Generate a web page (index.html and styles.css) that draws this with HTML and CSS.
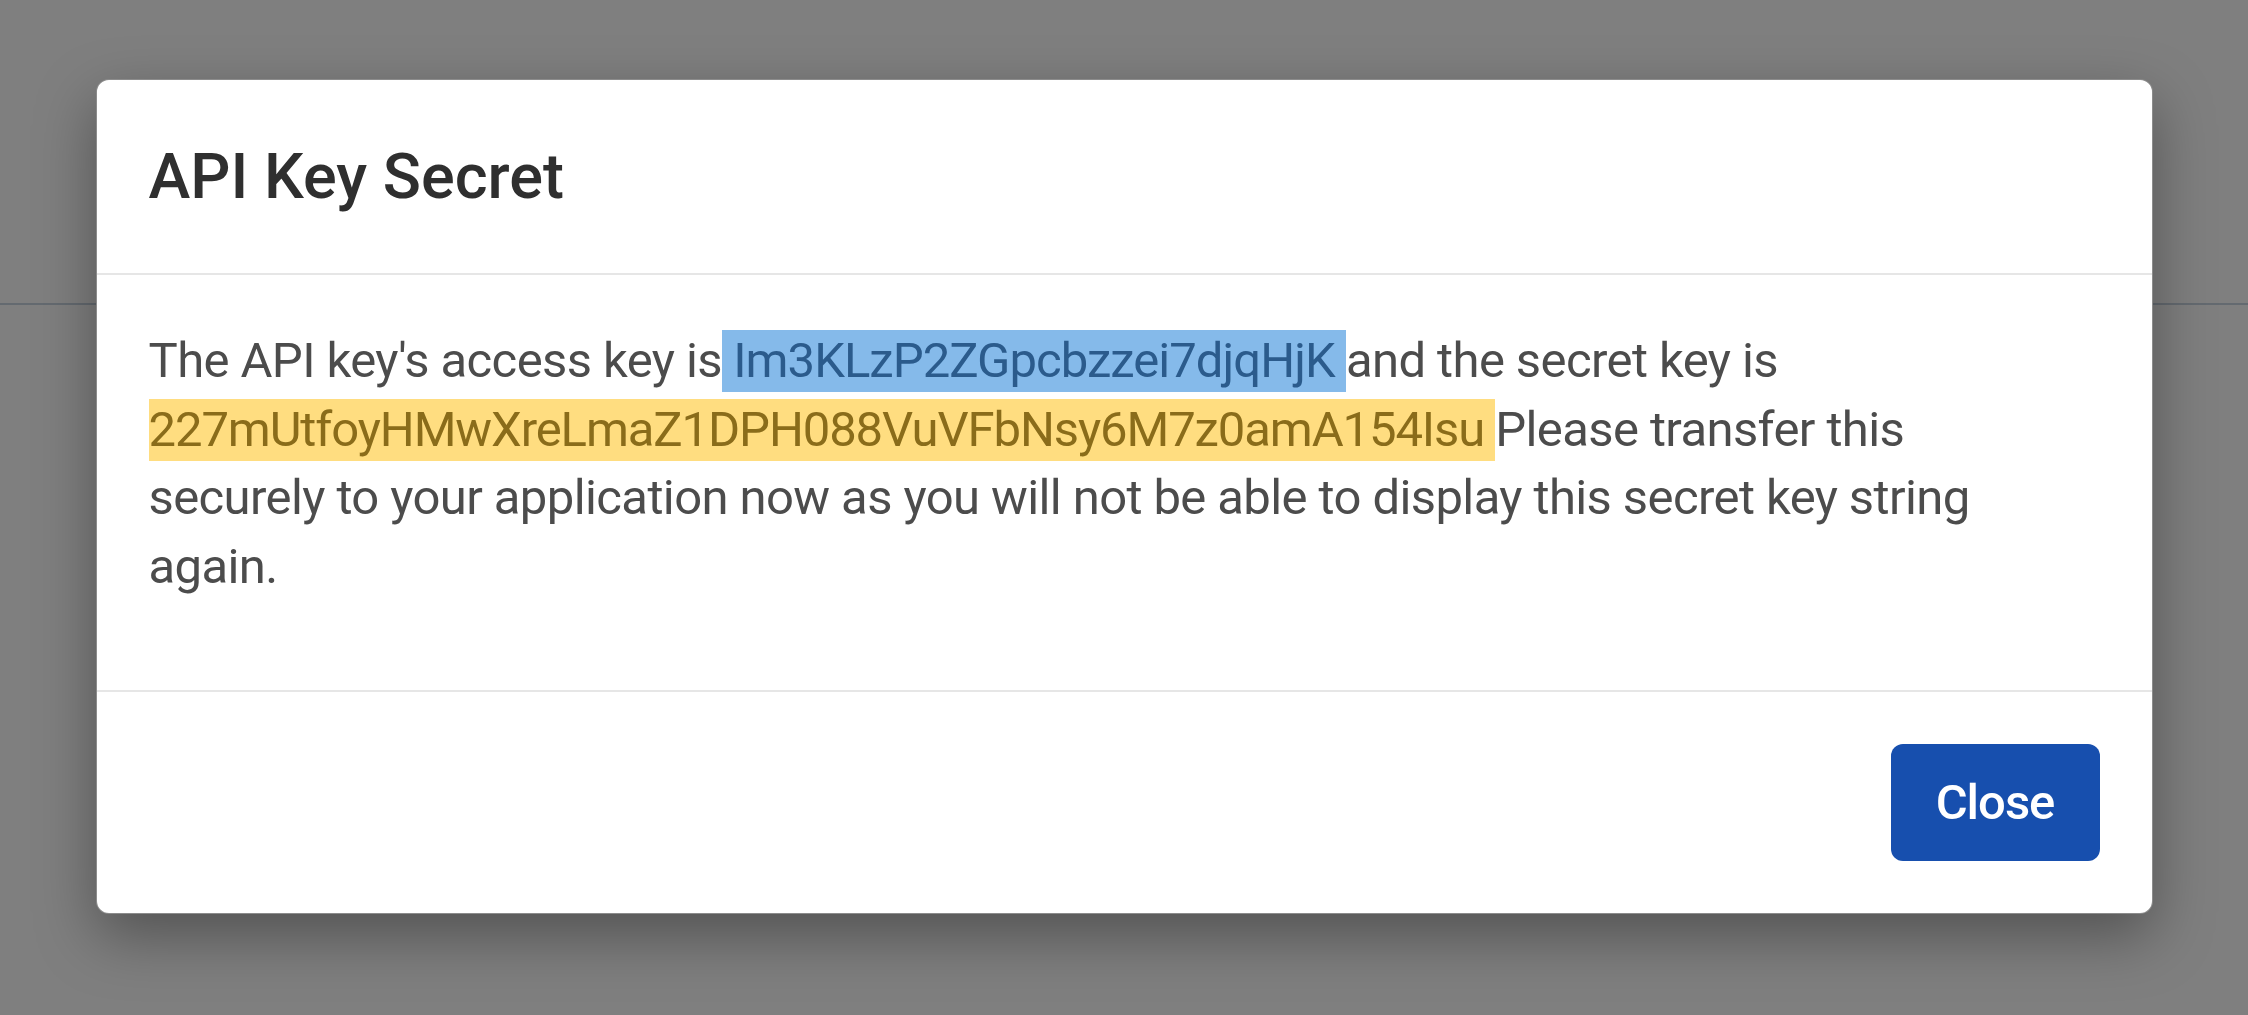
FILE: index.html
```html
<!DOCTYPE html>
<html lang="en">
<head>
<meta charset="utf-8">
<title>API Key Secret</title>
<link rel="stylesheet" href="styles.css">
</head>
<body>
<div class="page">
  <div class="page-header"></div>
</div>
<div class="overlay">
  <div class="modal" role="dialog" aria-labelledby="modal-title">
    <div class="modal-header">
      <h2 class="modal-title" id="modal-title">API Key Secret</h2>
    </div>
    <div class="modal-body">
      <p class="message">The API key's access key is<mark class="key key-access"> Im3KLzP2ZGpcbzzei7djqHjK </mark>and the secret key is<mark class="key key-secret"> 227mUtfoyHMwXreLmaZ1DPH088VuVFbNsy6M7z0amA154Isu </mark>Please transfer this securely to your application now as you will not be able to display this secret key string again.</p>
    </div>
    <div class="modal-footer">
      <button class="btn-primary" type="button">Close</button>
    </div>
  </div>
</div>
</body>
</html>
```

FILE: styles.css
```css
html, body {
  margin: 0;
  padding: 0;
  height: 100%;
}

body {
  background: #7f7f7f;
  font-family: Roboto, "Liberation Sans", sans-serif;
  overflow: hidden;
}

.page {
  height: 100%;
}

.page-header {
  height: 303px;
  border-bottom: 2px solid #646a70;
}

.overlay {
  position: fixed;
  inset: 0;
  display: flex;
  justify-content: center;
  align-items: flex-start;
  padding-top: 79px;
}

.modal {
  width: 2057px;
  box-sizing: border-box;
  background: #ffffff;
  border: 1px solid rgba(0, 0, 0, 0.45);
  border-radius: 13px;
  box-shadow: 0 22px 60px rgba(0, 0, 0, 0.35);
  display: flex;
  flex-direction: column;
}

.modal-header {
  padding: 53px 52px 52px;
  border-bottom: 2px solid #e6e6e6;
}

.modal-title {
  margin: 0;
  font-size: 63px;
  line-height: 88px;
  font-weight: 500;
  color: #2f2f2f;
  letter-spacing: 0;
}

.modal-body {
  padding: 52px 72px 52px 52px;
}

.message {
  margin: 0 0 37px;
  font-size: 49px;
  line-height: 68.5px;
  color: #4c4c4c;
  letter-spacing: -0.6px;
}

.key {
  padding: 2px 0 3px;
  letter-spacing: -1.1px;
}

.key-access {
  background: #85baea;
  color: #2b5b8c;
  letter-spacing: -0.95px;
}

.key-secret {
  background: #ffdd80;
  color: #8a6c1a;
}

.modal-footer {
  display: flex;
  justify-content: flex-end;
  padding: 52px 52px 52px;
  border-top: 2px solid #e6e6e6;
}

.btn-primary {
  width: 209px;
  height: 117px;
  border: none;
  border-radius: 12px;
  background: #174fae;
  color: #ffffff;
  font-family: Roboto, "Liberation Sans", sans-serif;
  font-size: 49px;
  font-weight: 500;
  letter-spacing: -1px;
  padding: 0;
  cursor: pointer;
}
```
